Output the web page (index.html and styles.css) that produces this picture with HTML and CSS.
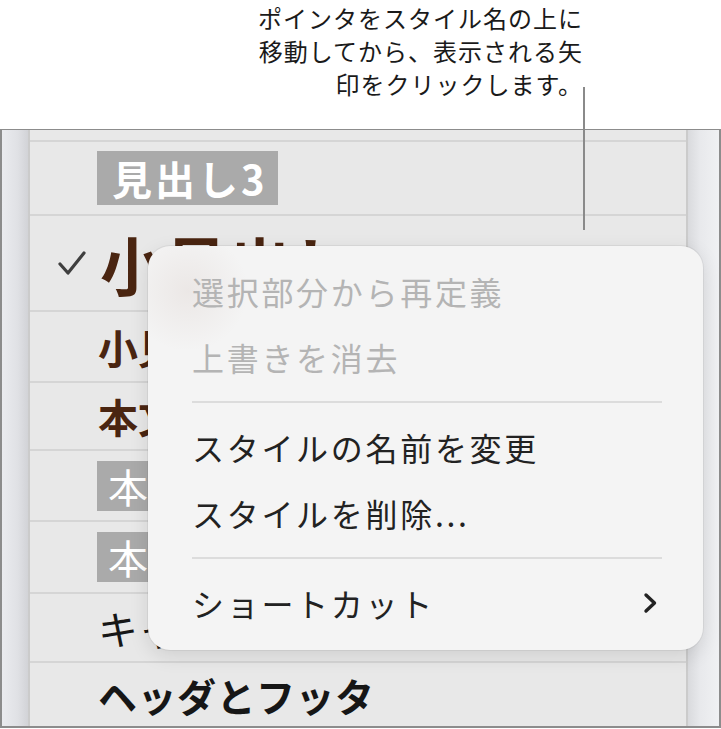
FILE: index.html
```html
<!DOCTYPE html>
<html lang="ja">

<head>
    <meta charset="UTF-8" />
    <meta name="viewport" content="width=device-width, initial-scale=1.0" />
    <title>スタイルメニュー</title>
    <link rel="stylesheet" href="styles.css">
</head>

<body>
    <div class="page">

        <!-- 説明テキスト -->
        <p class="callout-text">ポインタをスタイル名の上に<br>移動してから、表示される矢<br>印をクリックします。</p>

        <div class="window">
            <div class="side side-left"></div>

            <ul class="style-list">
                <li class="row row-top"></li>
                <li class="row row-h3"><span class="tag tag-heading">見出し3</span></li>
                <li class="row row-sub-big">
                    <svg class="check" width="30" height="26" viewBox="0 0 30 26" aria-hidden="true">
                        <path d="M3 14 L11 23 L27 3" fill="none" stroke="#3f3f3f" stroke-width="3.2" stroke-linecap="round" stroke-linejoin="round" />
                    </svg>
                    <span class="name name-big">小見出し</span>
                </li>
                <li class="row row-sub"><span class="name name-brown">小見出し</span></li>
                <li class="row row-body"><span class="name name-brown">本文</span></li>
                <li class="row row-body2"><span class="tag tag-body">本文</span></li>
                <li class="row row-body3"><span class="tag tag-body">本文</span></li>
                <li class="row row-caption"><span class="name name-plain">キャプション</span></li>
                <li class="row row-header"><span class="name name-header">ヘッダとフッタ</span></li>
            </ul>

            <div class="side side-right"></div>
        </div>

        <!-- 引き出し線 -->
        <div class="callout-line"></div>

        <!-- コンテキストメニュー -->
        <div class="menu">
            <div class="menu-item disabled">選択部分から再定義</div>
            <div class="menu-item disabled">上書きを消去</div>
            <div class="menu-sep"></div>
            <div class="menu-item">スタイルの名前を変更</div>
            <div class="menu-item">スタイルを削除...</div>
            <div class="menu-sep"></div>
            <div class="menu-item">
                <span>ショートカット</span>
                <svg class="chevron" width="16" height="24" viewBox="0 0 16 24" aria-hidden="true">
                    <path d="M4 4 L12.5 12 L4 20" fill="none" stroke="#222" stroke-width="3.4" stroke-linecap="round" stroke-linejoin="round" />
                </svg>
            </div>
        </div>

    </div>
</body>

</html>
```

FILE: styles.css
```css
* {
    box-sizing: border-box;
}

body {
    margin: 0;
    background: #fff;
    font-family: "Noto Sans CJK JP", "Noto Sans", sans-serif;
    color: #1d1d1d;
}

.page {
    position: relative;
    width: 721px;
    height: 729px;
    overflow: hidden;
}

.callout-text {
    margin: 0;
    height: 129px;
    padding: 1px 138px 0 0;
    text-align: right;
    font-size: 24px;
    line-height: 33px;
    letter-spacing: 1px;
    color: #1a1a1a;
}

.callout-line {
    position: absolute;
    left: 583px;
    top: 87px;
    width: 2px;
    height: 143px;
    background: #8a8a8a;
}

/* ウィンドウ */
.window {
    display: grid;
    grid-template-columns: 28px 1fr 33px;
    height: 599px;
    border: 2px solid #8c8c8c;
    border-top-width: 1px;
    background: #e8e8e8;
}

.side-left {
    background: linear-gradient(to right, #eaebef, #e0e1e5 60%, #d2d3d7);
    border-right: 2px solid #cbcbcb;
}

.side-right {
    background: linear-gradient(to right, #d9dadd, #e8e9ec 40%, #f0f1f3);
    border-left: 2px solid #cbcbcb;
}

.style-list {
    display: flex;
    flex-direction: column;
    margin: 0;
    padding: 0;
    list-style: none;
}

.row {
    display: flex;
    align-items: center;
    padding-left: 68px;
    border-top: 2px solid #d5d5d5;
}

.row-top {
    height: 10px;
    border-top: none;
}

.row-h3 { height: 74px; }
.row-sub-big { height: 96px; padding-left: 27px; }
.row-sub { height: 71px; }
.row-body { height: 68px; }
.row-body2 { height: 71px; }
.row-body3 { height: 72px; }
.row-caption { height: 69px; }
.row-header { flex: 1; }

.check {
    margin-right: 13px;
}

.name {
    white-space: nowrap;
}

.name-big {
    font-size: 64px;
    font-weight: 600;
    color: #4a2511;
    line-height: 1;
}

.name-brown {
    font-size: 40px;
    font-weight: 700;
    color: #4a2511;
}

.name-plain {
    font-size: 40px;
    color: #161616;
}

.name-header {
    font-size: 39px;
    font-weight: 600;
    letter-spacing: 0.5px;
    color: #161616;
}

.tag {
    display: inline-block;
    background: #aaaaaa;
    color: #fff;
    white-space: nowrap;
}

.tag-heading {
    height: 54px;
    margin-left: -1px;
    padding: 0 10px 0 15px;
    font-size: 40px;
    font-weight: 700;
    line-height: 54px;
    letter-spacing: 3px;
}

.tag-body {
    height: 50px;
    margin-left: -1px;
    padding: 0 11px;
    font-size: 40px;
    line-height: 50px;
}

/* メニュー */
.menu {
    position: absolute;
    left: 148px;
    top: 246px;
    width: 555px;
    padding: 12px 0 14px;
    border-radius: 22px;
    background:
        radial-gradient(circle at 40px 45px, rgba(190, 165, 155, 0.16), transparent 60px),
        #f4f4f4;
    box-shadow: 0 0 0 1px rgba(0, 0, 0, 0.05), 0 6px 20px rgba(0, 0, 0, 0.11);
}

.menu-item {
    display: flex;
    align-items: center;
    justify-content: space-between;
    height: 66px;
    padding: 0 45px 0 44px;
    font-size: 32px;
    letter-spacing: 2.7px;
    color: #222;
    white-space: nowrap;
}

.menu-item.disabled {
    color: #b4b4b4;
}

.menu-sep {
    height: 2px;
    margin: 11px 41px 11px 44px;
    background: #dcdcdc;
}
```
